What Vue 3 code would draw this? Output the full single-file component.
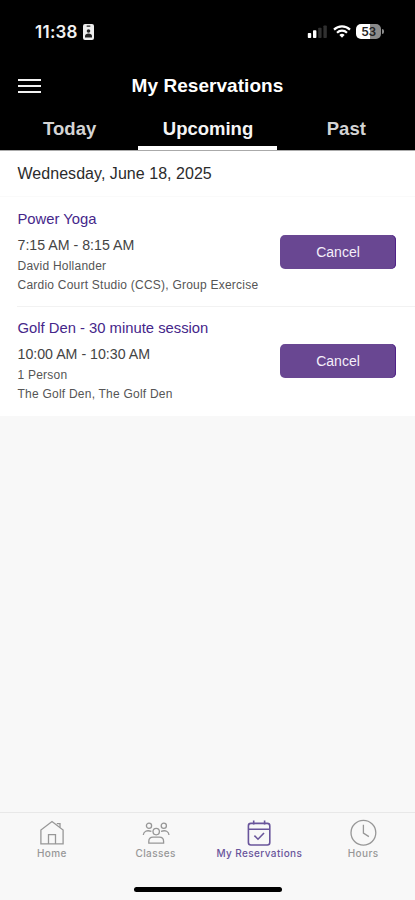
<template>
  <div class="phone">
    <header class="header">
      <!-- status bar -->
      <div class="status-bar">
        <div class="status-left">
          <span class="clock">11:38</span>
          <svg width="11" height="16" viewBox="0 0 11 16">
            <rect x="0" y="0" width="11" height="16" rx="2" fill="#ededed" />
            <rect x="3.5" y="1.5" width="4" height="1.2" rx="0.6" fill="#222" />
            <circle cx="5.5" cy="7" r="1.8" fill="#222" />
            <path d="M2 13.5V12.5C2 10.5 3.5 9.6 5.5 9.6S9 10.5 9 12.5V13.5Z" fill="#222" />
          </svg>
        </div>
        <div class="status-right">
          <svg class="signal" width="20" height="13" viewBox="0 0 20 13">
            <rect x="0.8" y="8" width="3.4" height="5" rx="0.8" fill="#fff" />
            <rect x="6" y="5.3" width="3.4" height="7.7" rx="0.8" fill="#fff" />
            <rect x="11.2" y="2.8" width="3.4" height="10.2" rx="0.8" fill="#303030" />
            <rect x="16.4" y="0.4" width="3.4" height="12.6" rx="0.8" fill="#303030" />
          </svg>
          <svg class="wifi" width="18" height="13" viewBox="0 0 18 13" fill="none" stroke="#fff" stroke-width="2.2">
            <path d="M1 4.6C5.4 0.2 12.6 0.2 17 4.6" />
            <path d="M4 7.7C6.8 5 11.2 5 14 7.7" />
            <path d="M6.4 9.9C7.9 8.5 10.1 8.5 11.6 9.9L9 12.7Z" fill="#fff" stroke="none" />
          </svg>
          <div class="battery">
            <span class="battery-level">53</span>
            <i class="battery-tip"></i>
          </div>
        </div>
      </div>

      <!-- title -->
      <div class="title-bar">
        <button class="menu-button" aria-label="Menu">
          <span></span>
          <span></span>
          <span></span>
        </button>
        <h1>My Reservations</h1>
      </div>

      <!-- tabs -->
      <nav class="tabs">
        <button
          v-for="tab in tabs"
          :key="tab"
          :class="{ active: tab === activeTab }"
          @click="activeTab = tab"
        >
          <span>{{ tab }}</span>
        </button>
      </nav>
    </header>

    <main class="list">
      <h2 class="date">Wednesday, June 18, 2025</h2>
      <article v-for="item in reservations" :key="item.name" class="reservation">
        <div class="info">
          <h3>{{ item.name }}</h3>
          <p class="time">{{ item.time }}</p>
          <p class="detail">{{ item.who }}</p>
          <p class="detail place">{{ item.place }}</p>
        </div>
        <button class="cancel">Cancel</button>
      </article>
    </main>

    <!-- bottom navigation -->
    <footer class="bottom">
      <nav class="bottom-nav">
        <a class="nav-item">
          <svg width="28" height="28" viewBox="0 0 28 28">
            <path d="M2.9 24.9V11L14 2.5L25.1 11V24.9Z" />
            <path d="M10.5 24.9V15.7H17.5V24.9M18.8 4.6H22V8.2" />
          </svg>
          <span>Home</span>
        </a>
        <a class="nav-item classes">
          <svg width="28" height="28" viewBox="0 0 28 28">
            <circle cx="7" cy="6.7" r="2.6" />
            <circle cx="21.8" cy="6.7" r="2.6" />
            <circle cx="14.2" cy="12.6" r="3.2" />
            <path d="M1.3 16C1.6 12.4 4.6 10.8 9.4 12.3M27 16C26.7 12.4 23.8 10.8 19 12.3" />
            <path d="M6.8 24.2V22.4C6.8 19.4 8.5 18.2 11 18.2H17.4C19.9 18.2 21.6 19.4 21.6 22.4V24.2Z" />
          </svg>
          <span>Classes</span>
        </a>
        <a class="nav-item active">
          <svg width="28" height="28" viewBox="0 0 28 28">
            <rect x="3.4" y="4.4" width="21.4" height="21.6" rx="2.5" />
            <path d="M3.4 10.2H24.8M8.7 1.5V5.5M19.6 1.5V5.5M9.4 16.6L13 20.2L19 14" />
          </svg>
          <span>My Reservations</span>
        </a>
        <a class="nav-item">
          <svg width="28" height="28" viewBox="0 0 28 28">
            <circle cx="14.4" cy="13.8" r="12.4" />
            <path d="M14.4 5.7V14.1L19.9 17.6" />
          </svg>
          <span>Hours</span>
        </a>
      </nav>
      <div class="home-indicator"></div>
    </footer>
  </div>
</template>

<script setup>
import { ref } from 'vue';

const tabs = ['Today', 'Upcoming', 'Past'];
const activeTab = ref('Upcoming');

const reservations = ref([
  {
    name: 'Power Yoga',
    time: '7:15 AM - 8:15 AM',
    who: 'David Hollander',
    place: 'Cardio Court Studio (CCS), Group Exercise',
  },
  {
    name: 'Golf Den - 30 minute session',
    time: '10:00 AM - 10:30 AM',
    who: '1 Person',
    place: 'The Golf Den, The Golf Den',
  },
]);
</script>

<style>
body {
  margin: 0;
  background: #f8f8f8;
}
</style>

<style scoped>
* {
  box-sizing: border-box;
}

.phone {
  display: flex;
  flex-direction: column;
  width: 415px;
  height: 900px;
  overflow: hidden;
  background: #f8f8f8;
  font-family: "Liberation Sans", Arial, sans-serif;
}

button {
  border: none;
  padding: 0;
  background: none;
  font-family: inherit;
}

h1, h2, h3, p {
  margin: 0;
}

.header {
  height: 151px;
  background: #000;
  color: #fff;
  border-bottom: 1px solid #aaa;
}

.status-bar {
  display: flex;
  justify-content: space-between;
  align-items: center;
  height: 63px;
  padding: 0 31px 0 35px;
}

.status-left, .status-right {
  display: flex;
  align-items: center;
}

.clock {
  width: 43px;
  margin-right: 5px;
  font: 600 17px/20px Inter, sans-serif;
  letter-spacing: 0.25px;
  color: #f2f2f2;
}

.wifi {
  margin: 0 5px 0 6px;
}

.battery {
  position: relative;
  width: 25px;
  height: 15px;
  margin-right: 3px;
  border-radius: 5px;
  background: linear-gradient(to right, #fff 55%, #8b8b8b 55%);
  text-align: center;
}

.battery-level {
  display: block;
  font: 600 12px/15px Inter, sans-serif;
  letter-spacing: -0.3px;
  color: #222;
}

.battery-tip {
  position: absolute;
  right: -3px;
  top: 5px;
  width: 2px;
  height: 5px;
  border-radius: 0 2px 2px 0;
  background: #8b8b8b;
}

.title-bar {
  display: grid;
  grid-template-columns: 60px 1fr 60px;
  align-items: center;
  height: 46px;
}

.menu-button {
  display: flex;
  flex-direction: column;
  gap: 4px;
  width: 23px;
  margin-left: 18px;
}

.menu-button span {
  height: 2px;
  background: #f2f2f2;
}

h1 {
  text-align: center;
  font-size: 19px;
  line-height: 22px;
  letter-spacing: 0.05px;
}

.tabs {
  display: grid;
  grid-template-columns: repeat(3, 1fr);
  height: 41px;
}

.tabs button {
  padding-top: 2px;
  border-bottom: 4px solid transparent;
  font-size: 18.5px;
  font-weight: 700;
  color: #d4d4d4;
}

.tabs .active {
  border-bottom-color: #fff;
  color: #f5f5f5;
}

.tabs span {
  padding-left: 1px;
}

.list {
  background: #fff;
}

.date {
  height: 46px;
  border-bottom: 1px solid #fafafa;
  padding-left: 17.5px;
  font-size: 16px;
  line-height: 46px;
  letter-spacing: 0.04px;
  font-weight: 400;
  color: #2b2b2b;
}

.reservation {
  display: flex;
  justify-content: space-between;
  height: 110px;
  margin-left: 17px;
  padding: 12px 19px 0 0.5px;
  border-bottom: 1px solid #f2f2f2;
}

.reservation:last-child {
  height: 109px;
  padding-top: 11px;
  border-bottom: none;
}

h3 {
  font-size: 14.8px;
  line-height: 20px;
  font-weight: 400;
  color: #45268a;
}

.time {
  margin-top: 6px;
  font-size: 14.2px;
  line-height: 20px;
  color: #444;
}

.detail {
  margin-top: 2px;
  font-size: 12px;
  line-height: 18px;
  letter-spacing: 0.23px;
  color: #555;
}

.place {
  margin-top: 1px;
}

.cancel {
  width: 116px;
  height: 34px;
  margin-top: 26px;
  border-radius: 5px;
  background: #694792;
  box-shadow: inset -1px 0 #4f2187;
  font-size: 14px;
  color: #f5effa;
}

.bottom {
  height: 88px;
  margin-top: auto;
  border-top: 1px solid #e8e8e8;
}

.bottom-nav {
  display: grid;
  grid-template-columns: repeat(4, 1fr);
  height: 74px;
}

.nav-item {
  display: flex;
  flex-direction: column;
  align-items: center;
  padding-top: 6px;
  font: 500 10px/13px Inter, sans-serif;
  letter-spacing: 0.4px;
  color: #979797;
}

.nav-item svg {
  fill: none;
  stroke: currentColor;
  stroke-width: 1.3;
}

.nav-item.active {
  color: #69559b;
}

.nav-item.active svg {
  stroke-width: 1.6;
}

.home-indicator {
  width: 148px;
  height: 5px;
  margin: 0 auto;
  border-radius: 3px;
  background: #000;
}
</style>
